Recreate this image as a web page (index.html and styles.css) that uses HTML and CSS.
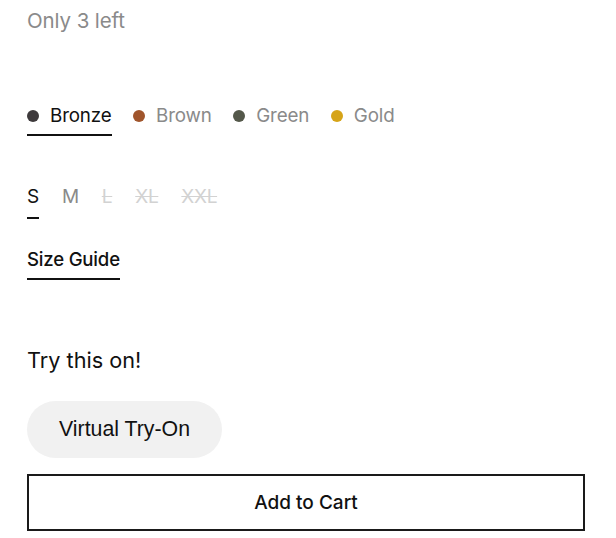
FILE: index.html
```html
<!DOCTYPE html>
<html lang="en">
<head>
<meta charset="utf-8">
<link rel="stylesheet" href="styles.css">
</head>
<body>
<div class="panel">
  <p class="stock">Only 3 left</p>
  <div class="colors">
    <button class="color active"><span class="dot bronze"></span>Bronze</button>
    <button class="color"><span class="dot brown"></span>Brown</button>
    <button class="color"><span class="dot green"></span>Green</button>
    <button class="color"><span class="dot gold"></span>Gold</button>
  </div>
  <div class="sizes">
    <button class="size active">S</button>
    <button class="size">M</button>
    <button class="size off">L</button>
    <button class="size off">XL</button>
    <button class="size off">XXL</button>
  </div>
  <a class="guide">Size Guide</a>
  <p class="try">Try this on!</p>
  <button class="vto">Virtual Try-On</button>
  <button class="cart">Add to Cart</button>
</div>
</body>
</html>
```
FILE: styles.css
```css
* { box-sizing: border-box; }
body { margin: 0; background: #fff; font-family: "Inter", "DejaVu Sans", sans-serif; color: #111; }
.panel { padding: 0 31px 0 27px; display: flex; flex-direction: column; align-items: flex-start; }
button { font: inherit; background: none; border: 0; padding: 0; color: inherit; cursor: pointer; }
.stock { margin: 9px 0 0; font-size: 20.5px; line-height: 24px; color: #8a8a8a; letter-spacing: -0.1px; }
.colors { display: flex; gap: 21.5px; margin-top: 71px; }
.color { display: flex; align-items: center; gap: 11px; font-size: 18.8px; line-height: 24px; color: #8a8a8a; padding-bottom: 6px; border-bottom: 2px solid transparent; letter-spacing: -0.15px; }
.color.active { color: #111; border-bottom-color: #111; }
.dot { width: 12px; height: 12px; border-radius: 50%; }
.bronze { background: #3e3a3c; }
.brown { background: #a0552c; }
.green { background: #54584a; }
.gold { background: #d6a418; }
.sizes { display: flex; gap: 23px; margin-top: 49px; }
.size { font-size: 19px; line-height: 24px; color: #8a8a8a; padding-bottom: 8px; border-bottom: 2px solid transparent; letter-spacing: -0.3px; }
.size.active { color: #111; border-bottom-color: #111; }
.size.off { color: #d2d2d2; text-decoration: line-through; }
.guide { margin-top: 28px; font-size: 18.6px; font-weight: 500; line-height: 24px; padding-bottom: 7px; border-bottom: 2px solid #111; letter-spacing: -0.2px; }
.try { margin: 67px 0 0; font-size: 21.7px; line-height: 26px; }
.vto { margin-top: 28px; height: 57px; padding: 0 32px; border-radius: 29px; background: #f1f1f1; font-family: "Liberation Sans", Arial, sans-serif; font-size: 21.3px; color: #111; }
.cart { margin-top: 16px; align-self: stretch; height: 57px; border: 2px solid #1a1a1a; font-size: 19px; font-weight: 500; color: #111; }
```
